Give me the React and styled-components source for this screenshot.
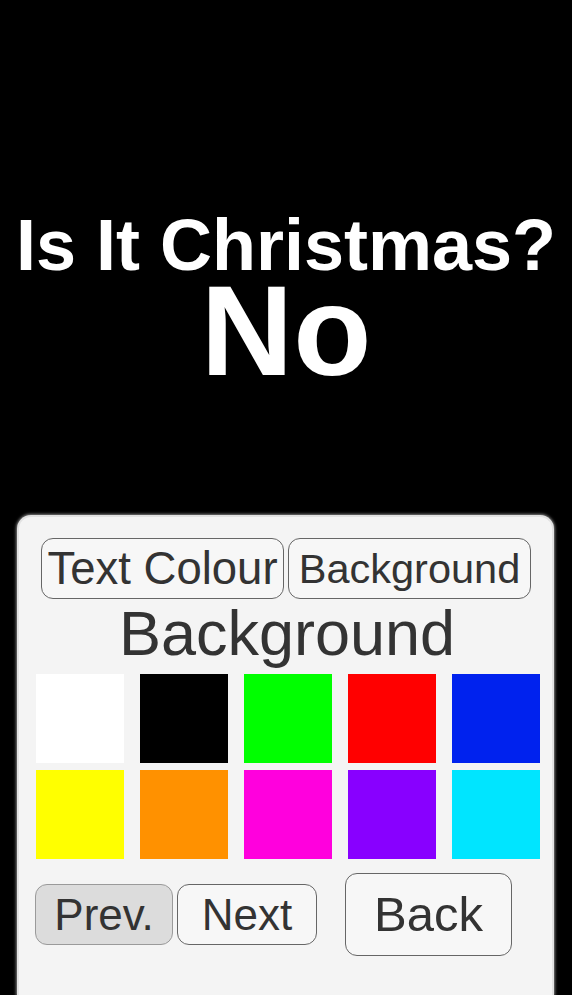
import React from "react";
import styled, { createGlobalStyle } from "styled-components";

const Global = createGlobalStyle`
  html, body { margin: 0; padding: 0; background: #000; }
  body { font-family: "Liberation Sans", Arial, sans-serif; overflow: hidden; }
`;

const Page = styled.div`
  width: 572px;
  height: 995px;
  background: #000;
  display: flex;
  flex-direction: column;
  overflow: hidden;
`;

const Header = styled.header`
  height: 515px;
  padding-top: 209px;
  box-sizing: border-box;
  display: flex;
  flex-direction: column;
  align-items: center;
  color: #fff;
  font-family: "Liberation Sans", Arial, sans-serif;
  font-weight: bold;
`;

const Question = styled.h1`
  margin: 0;
  font-size: 72px;
  line-height: 72px;
  font-weight: bold;
  white-space: nowrap;
`;

const Answer = styled.div`
  font-size: 128px;
  line-height: 100px;
`;

const Panel = styled.section`
  margin-left: 17px;
  width: 537px;
  flex: 1;
  background: #f4f4f4;
  border: 2px solid #e2e2e2;
  border-bottom: none;
  border-radius: 14px 14px 0 0;
  box-shadow: 0 0 3px 1px rgba(220, 220, 220, 0.6);
  box-sizing: border-box;
  padding: 21px 12px 0 17px;
  display: flex;
  flex-direction: column;
  color: #333;
`;

const Tabs = styled.div`
  display: flex;
  gap: 4px;
  padding-left: 5px;
`;

const Button = styled.button`
  font-family: "Liberation Sans", Arial, sans-serif;
  color: #333;
  background: ${(p) => (p.$pressed ? "#dcdcdc" : "#f7f7f7")};
  border: 1.5px solid ${(p) => (p.$pressed ? "#9a9a9a" : "#666")};
  border-radius: 12px;
  padding: 0;
  box-sizing: border-box;
  width: ${(p) => p.$w}px;
  height: ${(p) => p.$h}px;
  font-size: ${(p) => p.$fs}px;
  line-height: 1;
  display: flex;
  align-items: center;
  justify-content: center;
  white-space: nowrap;
`;

const SectionTitle = styled.h2`
  margin: 2px 0 0;
  font-weight: normal;
  font-size: 63px;
  line-height: 64px;
  text-align: center;
  padding-right: 2px;
`;

const Swatches = styled.div`
  margin-top: 9px;
  display: grid;
  grid-template-columns: repeat(5, 88px);
  grid-auto-rows: 89px;
  justify-content: space-between;
  row-gap: 7px;
`;

const Swatch = styled.div`
  background: ${(p) => p.$c};
`;

const BottomRow = styled.div`
  margin-top: 14px;
  display: flex;
  align-items: center;
`;

const Pager = styled.div`
  display: flex;
  gap: 4px;
  margin-left: -1px;
`;

const BackWrap = styled.div`
  margin-left: 28px;
`;

const colours = [
  "#ffffff",
  "#000000",
  "#00ff00",
  "#ff0000",
  "#0022ee",
  "#ffff00",
  "#ff9100",
  "#ff00dd",
  "#8800ff",
  "#00e5ff",
];

export default function App() {
  return (
    <>
      <Global />
      <Page>
        <Header>
          <Question>Is It Christmas?</Question>
          <Answer>No</Answer>
        </Header>
        <Panel>
          <Tabs>
            <Button $w={243} $h={61} $fs={45.5}>Text Colour</Button>
            <Button $w={243} $h={61} $fs={41.5}>Background</Button>
          </Tabs>
          <SectionTitle>Background</SectionTitle>
          <Swatches>
            {colours.map((c) => (
              <Swatch key={c} $c={c} />
            ))}
          </Swatches>
          <BottomRow>
            <Pager>
              <Button $pressed $w={138} $h={61} $fs={44}>Prev.</Button>
              <Button $w={140} $h={61} $fs={44}>Next</Button>
            </Pager>
            <BackWrap>
              <Button $w={167} $h={83} $fs={49}>Back</Button>
            </BackWrap>
          </BottomRow>
        </Panel>
      </Page>
    </>
  );
}
